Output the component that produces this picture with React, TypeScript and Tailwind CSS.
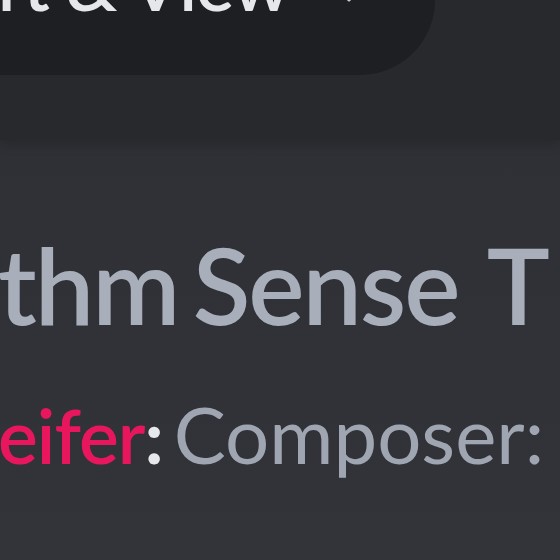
import React from "react";

function App() {
  return (
    <div className="w-[560px] h-[560px] overflow-hidden bg-[#313238] font-['Lato',sans-serif]">
      {/* top bar */}
      <div className="h-[140px] bg-[#28292d] shadow-[0_6px_10px_rgba(0,0,0,0.15)] relative">
        <div className="flex items-start w-[495px] h-[75px] -ml-[60px] bg-[#1e1f22] rounded-br-[75px] overflow-hidden">
          <div className="flex items-start gap-[48px] pl-[58px]">
            <span className="text-[72px] font-semibold leading-none text-[#e6e7ea] -mt-[53px] whitespace-nowrap tracking-[-1px]">
              rt &amp; View
            </span>
            <svg width="24" height="24" viewBox="0 0 24 24" className="-mt-[15px]">
              <path d="M6 9l6 6 6-6" fill="none" stroke="#c9cbd0" strokeWidth="3" strokeLinecap="round" strokeLinejoin="round" />
            </svg>
          </div>
        </div>
      </div>

      {/* content */}
      <div className="flex flex-col pt-[91px] bg-gradient-to-b from-[#2f3035] to-[#34353b] h-full">
        <h1 className="text-[106px] font-semibold leading-none text-[#a8afbb] whitespace-nowrap -ml-[2px] tracking-[-2px] [word-spacing:-10px]">
          thm Sense<span className="ml-[17px]"> T</span>
        </h1>
        <div className="flex items-baseline mt-[58px] text-[75px] leading-none whitespace-nowrap -ml-[2px]">
          <span className="font-semibold text-[#e8175d] tracking-[-1px]">eifer</span>
          <span className="font-bold text-[#e6e8ec]">:</span>
          <span className="ml-[10px] text-[78px] text-[#9fa6b2]">Composer:</span>
        </div>
      </div>
    </div>
  );
}

export default App;
